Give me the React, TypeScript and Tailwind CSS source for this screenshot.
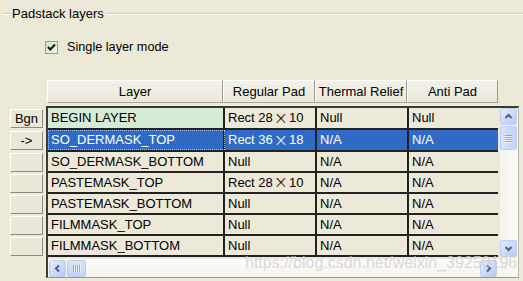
import React from "react";

const rows: [string, string, string, string][] = [
  ["BEGIN LAYER", "Rect 28×10", "Null", "Null"],
  ["SO_DERMASK_TOP", "Rect 36×18", "N/A", "N/A"],
  ["SO_DERMASK_BOTTOM", "Null", "N/A", "N/A"],
  ["PASTEMASK_TOP", "Rect 28×10", "N/A", "N/A"],
  ["PASTEMASK_BOTTOM", "Null", "N/A", "N/A"],
  ["FILMMASK_TOP", "Null", "N/A", "N/A"],
  ["FILMMASK_BOTTOM", "Null", "N/A", "N/A"],
];
const rowHeads = ["Bgn", "->", "", "", "", "", ""];

function Val({ text }: { text: string }) {
  const m = text.match(/^(.*?)(\d+)×(\d+)$/);
  if (!m) return <>{text}</>;
  return (
    <>
      {m[1]}
      {m[2]}
      <span className="inline-block mx-[1px] text-[17px] leading-none align-[-1px] font-['DejaVu_Sans',sans-serif] font-extralight">×</span>
      {m[3]}
    </>
  );
}

function Arrow({ dir }: { dir: "up" | "down" | "left" | "right" }) {
  const d =
    dir === "up"
      ? "M1.5 6 L4.5 3 L7.5 6"
      : dir === "down"
      ? "M1.5 3 L4.5 6 L7.5 3"
      : dir === "left"
      ? "M6 1.5 L3 4.5 L6 7.5"
      : "M3 1.5 L6 4.5 L3 7.5";
  return (
    <div className="w-[17px] h-[17px] shrink-0 rounded-[2px] border border-[#bccdf3] bg-gradient-to-br from-[#e3ebfd] to-[#b9cbf4] flex items-center justify-center">
      <svg width="9" height="9" viewBox="0 0 9 9">
        <path d={d} fill="none" stroke="#4d6185" strokeWidth="2" />
      </svg>
    </div>
  );
}

export default function App() {
  return (
    <div className="relative w-[523px] h-[281px] overflow-hidden bg-[#ECE9D8] text-black font-['Liberation_Sans',Arial,sans-serif] text-[13px]">
      {/* group title */}
      <div className="mt-[6px] h-[16px] flex items-center">
        <div className="ml-[4px] w-[7px] h-[2px] border-t border-b border-t-[#cfccbb] border-b-white" />
        <span className="px-[1px] leading-[16px]">Padstack layers</span>
        <div className="ml-[2px] flex-1 h-[2px] border-t border-b border-t-[#cfccbb] border-b-white" />
      </div>

      {/* checkbox */}
      <div className="mt-[19px] ml-[45px] h-[13px] flex items-center">
        <div className="w-[13px] h-[13px] border border-[#8ea28e] bg-gradient-to-br from-[#cfe3cc] to-[#eef6ec] flex items-center justify-center">
          <svg width="11" height="11" viewBox="0 0 11 11">
            <path d="M2 5 L4.3 7.5 L9 2.5" fill="none" stroke="#141414" strokeWidth="2" />
          </svg>
        </div>
        <span className="ml-[9px] text-[12.7px] leading-none">Single layer mode</span>
      </div>

      {/* table */}
      <div className="mt-[26px] flex">
        {/* row headers */}
        <div className="ml-[10px] w-[33px] flex flex-col">
          <div className="h-[28px]" />
          {rowHeads.map((h, i) => (
            <div key={i} className={`${i < 2 ? "h-[22px]" : "h-[21px]"} pt-[1px]`}>
              <div className="h-[19px] border-t border-l border-t-white border-l-white border-r border-b border-r-[#8e8b7c] border-b-[#8e8b7c] bg-[#ebe8d9] flex items-center justify-center leading-none">
                {h}
              </div>
            </div>
          ))}
        </div>

        <div className="ml-[3px] flex flex-col">
          {/* column headers */}
          <div className="ml-[1px] h-[23px] flex">
            {[
              ["Layer", "w-[176px]"],
              ["Regular Pad", "w-[92px]"],
              ["Thermal Relief", "w-[92px]"],
              ["Anti Pad", "w-[91px]"],
            ].map(([t, w]) => (
              <div
                key={t}
                className={`${w} h-[23px] border-t border-l border-t-white border-l-white border-r border-b border-r-[#9d9a89] border-b-[#a9a694] bg-gradient-to-b from-[#f3f1e8] to-[#ebe8da] flex items-center justify-center leading-none`}
              >
                {t}
              </div>
            ))}
          </div>

          {/* frame */}
          <div className="mt-[3px] w-[473px] border-t-2 border-l-2 border-t-[#3a3a36] border-l-[#3a3a36] border-r border-b border-r-[#b9b6a7] border-b-[#9c998a] flex">
            <div className="w-[452px] flex flex-col">
              <div className="h-[151px]">
                {rows.map((r, i) => {
                  const sel = i === 1;
                  const base = sel ? "bg-[#316AC5] text-white" : "bg-[#ECE9D8]";
                  return (
                    <div key={i} className={`w-[450px] ${i < 2 ? "h-[22px]" : "h-[21px]"} flex border-b-2 border-[#222220]`}>
                      <div
                        className={`w-[177px] border-r-2 border-[#222220] pl-[3px] flex items-center ${
                          i === 0 ? "bg-[#d5ebd6]" : base
                        } ${sel ? "outline-1 outline-dotted outline-[#a9c2ee] -outline-offset-1" : ""}`}
                      >
                        {r[0]}
                      </div>
                      <div className={`w-[92px] border-r-2 border-[#222220] pl-[3px] flex items-center ${base}`}>
                        <Val text={r[1]} />
                      </div>
                      <div className={`w-[92px] border-r-2 border-[#222220] pl-[3px] flex items-center ${base}`}>
                        {r[2]}
                      </div>
                      <div className={`w-[89px] pl-[3px] flex items-center ${base}`}>{r[3]}</div>
                    </div>
                  );
                })}
              </div>
              {/* horizontal scrollbar */}
              <div className="h-[18px] pl-[1px] pr-[3px] flex items-center bg-gradient-to-b from-[#fdfdfb] to-[#f4f3ee]">
                <Arrow dir="left" />
                <div className="ml-[1px] w-[19px] h-[17px] rounded-[2px] border border-[#bccdf3] bg-gradient-to-b from-[#d9e4fc] to-[#c3d4f7] flex items-center justify-center gap-[1px]">
                  {[0, 1, 2, 3].map((k) => (
                    <div key={k} className="w-[1px] h-[7px] bg-[#8fa7e0] shadow-[1px_0_0_#eef3fe]" />
                  ))}
                </div>
                <div className="flex-1" />
                <Arrow dir="right" />
              </div>
            </div>
            {/* vertical scrollbar */}
            <div className="w-[18px] flex flex-col bg-gradient-to-r from-[#f4f3ee] to-[#fbfbf8]">
              <div className="h-[151px] flex flex-col">
                <Arrow dir="up" />
                <div className="mt-[1px] w-[17px] h-[24px] rounded-[2px] border border-[#bccdf3] bg-gradient-to-r from-[#d9e4fc] to-[#c3d4f7] flex flex-col items-center justify-center gap-[1px]">
                  {[0, 1, 2, 3].map((k) => (
                    <div key={k} className="w-[7px] h-[1px] bg-[#8fa7e0] shadow-[0_1px_0_#eef3fe]" />
                  ))}
                </div>
                <div className="flex-1" />
                <Arrow dir="down" />
                <div className="h-[2px]" />
              </div>
              <div className="h-[18px]" />
            </div>
          </div>
        </div>
      </div>

      {/* watermark */}
      <div className="absolute left-[245px] top-[255px] text-[16px] leading-none text-[#cfcfcf]/80 pointer-events-none">
        https://blog.csdn.net/weixin_39250196
      </div>
    </div>
  );
}
